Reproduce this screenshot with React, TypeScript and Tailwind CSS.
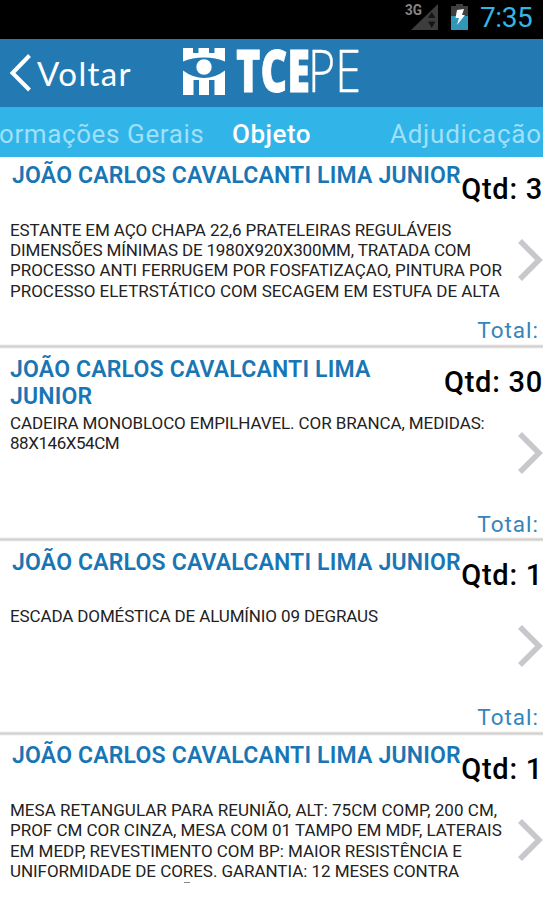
import React from "react";

type Line = { text: string; spacing: string };
type Item = { name: string[]; inset: boolean; qty: number; lines: Line[]; more?: boolean };

const items: Item[] = [
  {
    name: ["JOÃO CARLOS CAVALCANTI LIMA JUNIOR"],
    inset: true,
    qty: 3,
    lines: [
      { text: "ESTANTE EM AÇO CHAPA 22,6 PRATELEIRAS REGULÁVEIS", spacing: "tracking-[-0.11px]" },
      { text: "DIMENSÕES MÍNIMAS DE 1980X920X300MM, TRATADA COM", spacing: "tracking-[-0.16px]" },
      { text: "PROCESSO ANTI FERRUGEM POR FOSFATIZAÇAO, PINTURA POR", spacing: "tracking-[-0.02px]" },
      { text: "PROCESSO ELETRSTÁTICO COM SECAGEM EM ESTUFA DE ALTA", spacing: "tracking-[-0.02px]" },
    ],
  },
  {
    name: ["JOÃO CARLOS CAVALCANTI LIMA", "JUNIOR"],
    inset: false,
    qty: 30,
    lines: [
      { text: "CADEIRA MONOBLOCO EMPILHAVEL. COR BRANCA, MEDIDAS:", spacing: "tracking-[-0.1px]" },
      { text: "88X146X54CM", spacing: "tracking-[-0.45px]" },
    ],
  },
  {
    name: ["JOÃO CARLOS CAVALCANTI LIMA JUNIOR"],
    inset: true,
    qty: 1,
    lines: [{ text: "ESCADA DOMÉSTICA DE ALUMÍNIO 09 DEGRAUS", spacing: "tracking-[-0.13px]" }],
  },
  {
    name: ["JOÃO CARLOS CAVALCANTI LIMA JUNIOR"],
    inset: true,
    qty: 1,
    lines: [
      { text: "MESA RETANGULAR PARA REUNIÃO, ALT: 75CM COMP, 200 CM,", spacing: "tracking-[0.03px]" },
      { text: "PROF CM COR CINZA, MESA COM 01 TAMPO EM MDF, LATERAIS", spacing: "tracking-[-0.02px]" },
      { text: "EM MEDP, REVESTIMENTO COM BP: MAIOR RESISTÊNCIA E", spacing: "tracking-[-0.04px]" },
      { text: "UNIFORMIDADE DE CORES. GARANTIA: 12 MESES CONTRA", spacing: "tracking-[-0.05px]" },
    ],
    more: true,
  },
];

function StatusBar() {
  return (
    <div className="flex h-[39px] shrink-0 items-start justify-end bg-black">
      <svg className="mt-[2px] h-[32px] w-[68px]" viewBox="0 0 68 32">
        <text x="0" y="13" fontSize="15" fontWeight="700" fill="#858585" fontFamily="Roboto, sans-serif" textLength="17" lengthAdjust="spacingAndGlyphs">3G</text>
        <path d="M33 2V28H6Z" fill="#3d3d3d" />
        <path d="M23 16L26.700 10L30.500 16ZM23 19.500H30.500L26.700 26Z" fill="#151515" />
        <path d="M46 4H51V2H58V4H63V14H46Z" fill="#3f3f3f" />
        <path d="M46 14H63V28H46Z" fill="#3296b8" />
        <path d="M52 8L59 7L57 13H60L52 23L54 16H50.500Z" fill="#fff" />
      </svg>
      <span className="mr-[11px] ml-[7px] w-[52px] text-[28px] leading-[36px] tracking-[-0.4px] text-[#33b5e5]">7:35</span>
    </div>
  );
}

function Header() {
  return (
    <div className="flex h-[68px] shrink-0 items-start bg-[#237ab3]">
      <svg className="mt-[15px] ml-[9px] h-[38px] w-[24px]" viewBox="0 0 24 38">
        <path d="M20.500 1.500L3.500 19L20.500 36" fill="none" stroke="#fff" strokeWidth="4" />
      </svg>
      <span className="mt-[12px] ml-[4px] w-[96px] font-[Lato] text-[33px] leading-[44px] tracking-[1.4px] whitespace-nowrap text-white">Voltar</span>
      <svg className="mt-[9px] ml-[50px] h-[50px] w-[42px]" viewBox="0 0 42 50">
        <path d="M0 0H10V5H15.500V0H26V5H31.500V0H42V47H31.500V32H26V47H16V32H10.500V47H0Z" fill="#fff" />
        <path d="M0 13.500Q9 9.500 21 9.500Q33 9.500 42 13.500V22.500Q32 30 21 30Q10 30 0 22.500Z" fill="#237ab3" />
        <circle cx="21" cy="19" r="7.700" fill="#fff" />
      </svg>
      <svg className="mt-[1px] ml-[10px] h-[66px] w-[126px] overflow-visible" viewBox="0 -8 126 66">
        <text x="1" y="44" fontSize="58" fontWeight="800" fill="#fff" stroke="#fff" strokeWidth="0.8" fontFamily="'Open Sans', sans-serif" textLength="74" lengthAdjust="spacingAndGlyphs">TCE</text>
        <text x="73" y="44" fontSize="58" fontWeight="300" fill="#fff" stroke="#fff" strokeWidth="0.3" fontFamily="'Open Sans', sans-serif" textLength="53" lengthAdjust="spacingAndGlyphs">PE</text>
      </svg>
    </div>
  );
}

function Tabs() {
  return (
    <div className="relative z-10 flex h-[50px] shrink-0 items-center bg-[#31b4e8] pt-[3px] text-[26px] leading-[30px] whitespace-nowrap text-[#9fe0fa]">
      <span className="-ml-[1px] w-[233px] tracking-[0.6px]">ormações Gerais</span>
      <span className="w-[158px] font-medium tracking-[0.5px] text-white">Objeto</span>
      <span className="tracking-[0.75px]">Adjudicação</span>
    </div>
  );
}

function Row({ item }: { item: Item }) {
  return (
    <div className="flex h-[193.4px] shrink-0 flex-col bg-white">
      <div className="flex h-[63px] shrink-0 justify-between whitespace-nowrap">
        <div className={item.inset ? "w-[455px] pt-[6.5px] pl-[12px]" : "pt-[6.5px] pl-[10px]"}>
          {item.name.map((part) => (
            <div key={part} className="text-[23px] leading-[27px] font-semibold tracking-[0.18px] text-[#1976b4]">{part}</div>
          ))}
        </div>
        <div className="pt-[16px] text-[29px] leading-[34px] font-medium tracking-[0.75px] text-black">Qtd: {item.qty}</div>
      </div>
      <div className="flex h-[84px] shrink-0 justify-between">
        <div className="pt-px pl-[10px] text-[17px] leading-[20.4px] whitespace-nowrap text-[#222]">
          {item.lines.map((line) => (
            <div key={line.text} className={line.spacing}>{line.text}</div>
          ))}
          {item.more && <div className="mt-px ml-[174px] h-px w-[6px] bg-[#888]" />}
        </div>
        <svg className="mt-[19px] h-[44px] w-[26px] shrink-0" viewBox="0 0 26 44">
          <path d="M3 3L22 22L3 41" fill="none" stroke="#c7c7cc" strokeWidth="5.500" />
        </svg>
      </div>
      <div className="flex flex-1 justify-end pt-[14.5px] pr-[4px] text-[22.5px] leading-[26px] tracking-[1px] text-[#3585bd]">Total:</div>
      <div className="h-[5px] shrink-0 bg-linear-to-b from-white via-[#cfcccb] to-white" />
    </div>
  );
}

export default function App() {
  return (
    <div className="flex h-[900px] w-[543px] flex-col overflow-hidden bg-white font-[Roboto]">
      <StatusBar />
      <Header />
      <Tabs />
      <div className="-mt-[1.4px] flex h-[745px] shrink-0 flex-col overflow-hidden">
        {items.map((item, i) => (
          <Row key={i} item={item} />
        ))}
      </div>
    </div>
  );
}
